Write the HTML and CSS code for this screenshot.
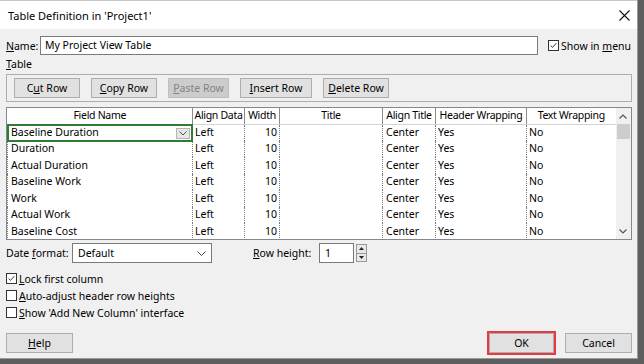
FILE: index.html
```html
<!DOCTYPE html>
<html lang="en">
<head>
  <meta charset="UTF-8" />
  <title>Table Definition</title>
  <link rel="stylesheet" href="styles.css">
</head>
<body>
  <div class="dialog">
    <div class="titlebar">
      <span>Table Definition in 'Project1'</span>
      <svg class="close" width="11" height="11" viewBox="0 0 11 11"><path d="M0.5 0.5 L10.5 10.5 M10.5 0.5 L0.5 10.5" stroke="#111" stroke-width="1.1" fill="none"/></svg>
    </div>

    <div class="content">
      <div class="name-row">
        <span class="name-label"><u>N</u>ame:</span>
        <div class="textbox">My Project View Table</div>
        <span class="check on"><svg width="11" height="11" viewBox="0 0 11 11"><path d="M2 5.5 L4.3 7.8 L9 2.6" stroke="#222" stroke-width="1.1" fill="none"/></svg></span>
        <span class="check-text">Show in <u>m</u>enu</span>
      </div>

      <div class="section-label"><u>T</u>able</div>

      <div class="toolbar">
        <button class="btn w-cut">C<u>u</u>t Row</button>
        <button class="btn w-copy"><u>C</u>opy Row</button>
        <button class="btn w-paste disabled"><u>P</u>aste Row</button>
        <button class="btn w-insert"><u>I</u>nsert Row</button>
        <button class="btn w-delete"><u>D</u>elete Row</button>
      </div>

      <div class="grid">
        <table class="fields">
          <colgroup>
            <col class="c-name"><col class="c-align"><col class="c-width"><col class="c-title">
            <col class="c-atitle"><col class="c-hwrap"><col class="c-twrap">
          </colgroup>
          <thead>
            <tr>
              <th>Field Name</th><th>Align Data</th><th>Width</th><th>Title</th>
              <th>Align Title</th><th>Header Wrapping</th><th>Text Wrapping</th>
            </tr>
          </thead>
          <tbody>
            <tr>
              <td class="editing">Baseline Duration
                <div class="editor"><span class="drop"><svg width="8" height="5" viewBox="0 0 8 5"><path d="M0.5 0.5 L4 4 L7.5 0.5" stroke="#555" fill="none"/></svg></span></div>
              </td>
              <td>Left</td><td class="num">10</td><td></td><td>Center</td><td>Yes</td><td>No</td>
            </tr>
            <tr><td>Duration</td><td>Left</td><td class="num">10</td><td></td><td>Center</td><td>Yes</td><td>No</td></tr>
            <tr><td>Actual Duration</td><td>Left</td><td class="num">10</td><td></td><td>Center</td><td>Yes</td><td>No</td></tr>
            <tr><td>Baseline Work</td><td>Left</td><td class="num">10</td><td></td><td>Center</td><td>Yes</td><td>No</td></tr>
            <tr><td>Work</td><td>Left</td><td class="num">10</td><td></td><td>Center</td><td>Yes</td><td>No</td></tr>
            <tr><td>Actual Work</td><td>Left</td><td class="num">10</td><td></td><td>Center</td><td>Yes</td><td>No</td></tr>
            <tr><td>Baseline Cost</td><td>Left</td><td class="num">10</td><td></td><td>Center</td><td>Yes</td><td>No</td></tr>
          </tbody>
        </table>
        <div class="vscroll">
          <div class="arrow"><svg width="8" height="5" viewBox="0 0 8 5"><path d="M0.5 4.5 L4 1 L7.5 4.5" stroke="#555" stroke-width="1.2" fill="none"/></svg></div>
          <div class="thumb"></div>
          <div class="track"></div>
          <div class="arrow"><svg width="8" height="5" viewBox="0 0 8 5"><path d="M0.5 0.5 L4 4 L7.5 0.5" stroke="#555" stroke-width="1.2" fill="none"/></svg></div>
        </div>
      </div>

      <div class="options-row">
        <span class="date-label">Date <u>f</u>ormat:</span>
        <div class="select">
          <span>Default</span>
          <svg width="9" height="5" viewBox="0 0 9 5"><path d="M0.5 0.5 L4.5 4.5 L8.5 0.5" stroke="#444" fill="none"/></svg>
        </div>
        <span class="rh-label"><u>R</u>ow height:</span>
        <div class="spin-input">1</div>
        <div class="spin-buttons">
          <span><svg width="5" height="3" viewBox="0 0 5 3"><path d="M0 3 L2.5 0 L5 3 Z" fill="#222"/></svg></span>
          <span><svg width="5" height="3" viewBox="0 0 5 3"><path d="M0 0 L2.5 3 L5 0 Z" fill="#222"/></svg></span>
        </div>
      </div>

      <div class="checks">
        <div class="check-row">
          <span class="check on"><svg width="11" height="11" viewBox="0 0 11 11"><path d="M2 5.5 L4.3 7.8 L9 2.6" stroke="#222" stroke-width="1.1" fill="none"/></svg></span>
          <span class="check-text"><u>L</u>ock first column</span>
        </div>
        <div class="check-row">
          <span class="check"></span>
          <span class="check-text"><u>A</u>uto-adjust header row heights</span>
        </div>
        <div class="check-row">
          <span class="check"></span>
          <span class="check-text"><u>S</u>how 'Add New Column' interface</span>
        </div>
      </div>

      <div class="footer">
        <button class="btn w-help"><u>H</u>elp</button>
        <span class="spacer"></span>
        <button class="btn w-ok highlight">OK</button>
        <button class="btn w-cancel">Cancel</button>
      </div>
    </div>
  </div>
</body>
</html>
```

FILE: styles.css
```css
* { margin: 0; padding: 0; box-sizing: border-box; }

body {
  width: 644px;
  height: 364px;
  overflow: hidden;
  background: #5e5e5e;
  font-family: "Noto Sans", "Liberation Sans", sans-serif;
  font-size: 10.5px;
  color: #000;
}

u { text-decoration: underline; text-underline-offset: 1px; }

.dialog {
  width: 638px;
  height: 359px;
  background: #f0f0f0;
  border-right: 1px solid #9a9a9a;
  border-bottom: 1px solid #9a9a9a;
  display: flex;
  flex-direction: column;
}

.titlebar {
  height: 29px;
  background: #fff;
  border-top: 1px solid #c8c8c8;
  display: flex;
  align-items: center;
  justify-content: space-between;
  padding: 0 7px 0 8px;
  font-size: 11px;
}

.content {
  padding: 0 5px 0 6px;
  display: flex;
  flex-direction: column;
}

/* Nome da tabela */
.name-row {
  margin-top: 7px;
  height: 19px;
  display: flex;
  align-items: center;
}

.name-label { width: 34px; }

.textbox {
  width: 498px;
  height: 19px;
  background: #fff;
  border: 1px solid #7a7a7a;
  padding-left: 4px;
  line-height: 17px;
}

.name-row .check { margin-left: 10px; }

.check {
  width: 11px;
  height: 11px;
  border: 1px solid #333;
  background: #fff;
  display: inline-flex;
  align-items: center;
  justify-content: center;
  flex: none;
}

.check svg { display: block; }

.check-text { margin-left: 2px; }

.section-label {
  margin-top: 2px;
  line-height: 14px;
}

/* Botões */
.toolbar {
  margin-top: 3px;
  height: 28px;
  border: 1px solid #acacac;
  padding: 0 7px;
  display: flex;
  align-items: center;
  gap: 11px;
}

.btn {
  height: 20px;
  background: #e1e1e1;
  border: 1px solid #adadad;
  font: inherit;
  color: #000;
  text-align: center;
}

.btn.disabled {
  background: #cccccc;
  border-color: #bfbfbf;
  color: #838383;
}

.w-cut { width: 66px; }
.w-copy { width: 66px; }
.w-paste { width: 61px; }
.w-insert { width: 72px; }
.w-delete { width: 66px; }
.w-help { width: 67px; }
.w-ok { width: 65px; }
.w-cancel { width: 67px; }

/* Grade */
.grid {
  margin-top: 5px;
  height: 133px;
  border: 1px solid #828790;
  background: #fff;
  display: flex;
}

.fields {
  width: 608px;
  table-layout: fixed;
  border-collapse: collapse;
}

.c-name { width: 185px; }
.c-align { width: 52px; }
.c-width { width: 35px; }
.c-title { width: 103px; }
.c-atitle { width: 53px; }
.c-hwrap { width: 91px; }
.c-twrap { width: 89px; }

.fields th {
  height: 16px;
  font-weight: normal;
  text-align: center;
  white-space: nowrap;
  overflow: hidden;
  letter-spacing: -0.3px;
  border-right: 1px solid #8c8c8c;
  border-bottom: 1px solid #d4d4d4;
  padding: 0;
  line-height: 15px;
}

.fields th:last-child { border-right: none; }

.fields tbody tr { height: 16.5px; }

.fields td {
  white-space: nowrap;
  padding: 0 2px;
  border-right: 1px dotted #7a7a7a;
  line-height: 15px;
}

.fields td:first-child {
  border-left: 1px dotted #7a7a7a;
  padding-left: 3px;
}

.fields td:last-child { border-right: none; }

.fields td.num { text-align: right; }

.fields td:nth-child(5) { padding-left: 3px; }

.editing { position: relative; }

.editor {
  position: absolute;
  left: -1px;
  top: -1px;
  right: -1px;
  bottom: -1px;
  border: 2px solid #2e7d32;
}

.drop {
  position: absolute;
  right: 1px;
  top: 2px;
  width: 14px;
  height: 11px;
  background: #e6e6e6;
  border: 1px solid #b5b5b5;
  display: flex;
  align-items: center;
  justify-content: center;
}

.vscroll {
  width: 16px;
  background: #f0f0f0;
  display: flex;
  flex-direction: column;
}

.vscroll .arrow {
  height: 16px;
  display: flex;
  align-items: center;
  justify-content: center;
}

.vscroll .thumb {
  height: 15px;
  margin: 0 1px;
  background: #cdcdcd;
}

.vscroll .track { flex: 1; }

/* Opções */
.options-row {
  margin-top: 3px;
  height: 20px;
  display: flex;
  align-items: center;
}

.date-label { width: 66px; }

.select {
  width: 140px;
  height: 20px;
  background: #fff;
  border: 1px solid #7a7a7a;
  display: flex;
  align-items: center;
  justify-content: space-between;
  padding: 0 5px 0 5px;
}

.rh-label { margin-left: 41px; width: 66px; }

.spin-input {
  width: 35px;
  height: 20px;
  background: #fff;
  border: 1px solid #7a7a7a;
  padding-left: 5px;
  line-height: 18px;
}

.spin-buttons {
  margin-left: 2px;
  width: 11px;
  height: 18px;
  display: flex;
  flex-direction: column;
  border: 1px solid #9a9a9a;
  background: #e8e8e8;
}

.spin-buttons span {
  flex: 1;
  display: flex;
  align-items: center;
  justify-content: center;
}

.spin-buttons span + span { border-top: 1px solid #9a9a9a; }

.checks {
  margin-top: 7px;
  display: flex;
  flex-direction: column;
}

.check-row {
  height: 17px;
  display: flex;
  align-items: center;
}

.footer {
  margin-top: 12px;
  display: flex;
  align-items: center;
}

.spacer { flex: 1; }

.highlight {
  outline: 2px solid #e8393f;
  margin-right: 11px;
}
```
